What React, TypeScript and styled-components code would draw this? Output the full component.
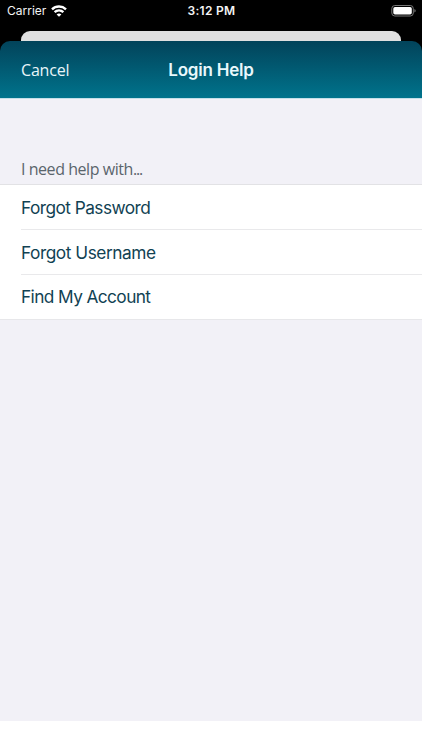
import React from "react";
import styled, { createGlobalStyle } from "styled-components";

const GlobalStyle = createGlobalStyle`
  * { box-sizing: border-box; }
  body { margin: 0; background: #fff; }
`;

const Screen = styled.div`
  width: 422px;
  height: 750px;
  overflow: hidden;
  display: flex;
  flex-direction: column;
  background: #fff;
  font-family: Inter, sans-serif;
`;

const Backdrop = styled.div`
  flex: none;
  background: #000;
`;

const StatusBar = styled.div`
  height: 31px;
  padding: 0 6px 9px 7px;
  display: grid;
  grid-template-columns: 1fr auto 1fr;
  align-items: center;
  color: #f4f4f4;
`;

const Network = styled.div`
  display: flex;
  align-items: center;
  gap: 5px;
`;

const Carrier = styled.span`
  width: 39px;
  font-size: 12px;
  line-height: 22px;
  white-space: nowrap;
`;

const Clock = styled.span`
  font-size: 12px;
  font-weight: 600;
  line-height: 22px;
  letter-spacing: 0.3px;
`;

const BatteryIcon = styled.svg`
  justify-self: end;
  display: block;
`;

const CardBehind = styled.div`
  height: 10px;
  margin: 0 21px;
  border-radius: 9px 9px 0 0;
  background: #e0e0e0;
`;

const NavBar = styled.header`
  height: 57px;
  padding: 0 21px;
  display: grid;
  grid-template-columns: 1fr auto 1fr;
  align-items: center;
  border-radius: 10px 10px 0 0;
  background: linear-gradient(#02435a, #00738c);
`;

const CancelButton = styled.button`
  justify-self: start;
  padding: 0;
  border: 0;
  background: none;
  color: #e9f5f9;
  font: 400 16px/24px "Open Sans", sans-serif;
  letter-spacing: -0.2px;
`;

const Title = styled.h1`
  margin: 0;
  color: #e9f8fc;
  font-size: 17px;
  font-weight: 600;
  line-height: 24px;
  letter-spacing: -0.2px;
`;

const Content = styled.main`
  height: 623px;
  flex: none;
  border-top: 1px solid #c4dfe8;
  background: #f2f1f7;
`;

const SectionLabel = styled.h2`
  margin: 0;
  padding: 59px 21px 3px;
  color: #5a656c;
  font: 400 16px/23px "Open Sans", sans-serif;
  letter-spacing: -0.45px;
`;

const Ellipsis = styled.span`
  letter-spacing: -1.2px;
`;

const List = styled.ul`
  margin: 0;
  padding: 0 0 0 21px;
  list-style: none;
  background: #fff;
  border-top: 1px solid #e2e2e5;
  border-bottom: 1px solid #e7e7ea;
`;

const RowButton = styled.button<{ $tracking: number }>`
  display: block;
  width: 100%;
  height: 44px;
  padding: 2px 0 0;
  border: 0;
  background: none;
  text-align: left;
  color: #114253;
  font: 400 17.3px/42px Inter, sans-serif;
  letter-spacing: ${(p) => p.$tracking}px;
`;

const Row = styled.li`
  height: 45px;
  border-bottom: 1px solid #e9e9eb;
  &:last-child {
    height: 44px;
    border-bottom: 0;
  }
  &:last-child ${RowButton} {
    padding: 0 0 1px;
  }
`;

const options = [
  { label: "Forgot Password", tracking: -0.55 },
  { label: "Forgot Username", tracking: -0.47 },
  { label: "Find My Account", tracking: -0.6 },
];

export default function App() {
  return (
    <Screen>
      <GlobalStyle />
      <Backdrop>
        <StatusBar>
          <Network>
            <Carrier>Carrier</Carrier>
            <svg width="16" height="12" viewBox="0 0 16 12" fill="none" stroke="#fff" strokeWidth="2.4">
              <path d="M1 4.3C4.9.6 11.1.6 15 4.3" />
              <path d="M3.6 7.2C6.1 4.9 9.9 4.9 12.4 7.2" />
              <path d="M8 11.7 5.6 9.4C7 8.2 9 8.2 10.4 9.4Z" fill="#fff" stroke="none" />
            </svg>
          </Network>
          <Clock>3:12 PM</Clock>
          <BatteryIcon width="25" height="12" viewBox="0 0 25 12">
            <rect x="0.8" y="0.5" width="21.5" height="10.5" rx="3" fill="none" stroke="#777" />
            <rect x="2.3" y="2" width="18.5" height="7.5" rx="1.7" fill="#fff" />
            <path d="M23.4 4v3.6q1.3-.5 1.3-1.8T23.4 4Z" fill="#777" />
          </BatteryIcon>
        </StatusBar>
        <CardBehind />
        <NavBar>
          <CancelButton>Cancel</CancelButton>
          <Title>Login Help</Title>
        </NavBar>
      </Backdrop>
      <Content>
        <SectionLabel>
          I need help with<Ellipsis>...</Ellipsis>
        </SectionLabel>
        <List>
          {options.map((o) => (
            <Row key={o.label}>
              <RowButton $tracking={o.tracking}>{o.label}</RowButton>
            </Row>
          ))}
        </List>
      </Content>
    </Screen>
  );
}
